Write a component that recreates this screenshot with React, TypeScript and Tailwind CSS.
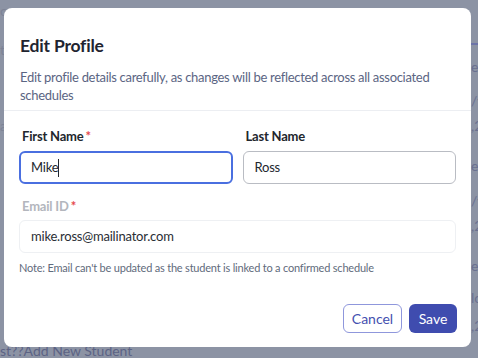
import React from 'react';

const font = { fontFamily: 'Lato, "Noto Sans", sans-serif' };

// rows of the student table that peeks out around the dialog
const backdropRows = [
    { h: 'h-[20px]', left: 'or', right: '' },
    { h: 'h-[20px]', left: '', right: '' },
    { h: 'h-[18px]', left: 't,2', right: '', bar: true },
    { h: 'h-[16px]', left: '', right: 'e' },
    { h: 'h-[16px]', left: '', right: '' },
    { h: 'h-[20px]', left: '', right: '/y' },
    { h: 'h-[30px]', left: 'a', right: ',2' },
    { h: 'h-[15px]', left: '', right: '' },
    { h: 'h-[20px]', left: '', right: 'e' },
    { h: 'h-[15px]', left: '', right: '' },
    { h: 'h-[20px]', left: '', right: '/y' },
    { h: 'h-[30px]', left: '', right: ',2' },
    { h: 'h-[15px]', left: '', right: '' },
    { h: 'h-[20px]', left: '', right: 'e' },
    { h: 'h-[12px]', left: '', right: '' },
    { h: 'h-[20px]', left: '', right: 'lo' },
    { h: 'h-[36px]', left: '', right: ',2' },
    { h: 'h-[15px]', left: 'st??Add New Student', right: '' },
];

function Field({ label, required, muted, children }: { label: string; required?: boolean; muted?: boolean; children: React.ReactNode }) {
    return (
        <div className="flex flex-col">
            <label className={`pl-[3px] text-[13px] leading-5 font-bold tracking-[-0.2px] ${muted ? 'text-[#b3b6bd]' : 'text-[#22262d]'}`}>
                {label}
                {required && <span className="text-[#e5484d] ml-[2px]">*</span>}
            </label>
            {children}
        </div>
    );
}

export default function App() {
    return (
        <div className="relative w-[478px] h-[358px] overflow-hidden bg-[#8c93a4]" style={font}>

            {/* Page behind the overlay */}
            <div className="flex flex-col text-[14px] text-[#6a7090]">
                {backdropRows.map((r, i) => (
                    <div key={i} className={`${r.h} flex justify-between items-center whitespace-nowrap`}>
                        <span className={i === 17 ? 'text-[#5c6384]' : 'text-[#7d8396]'}>{r.left}</span>
                        <div className="relative w-[7px] h-full flex items-center overflow-hidden">
                            {r.bar && <div className="absolute top-[3px] left-0 right-0 h-[2px] bg-[#6d74a8]"></div>}
                            <span>{r.right}</span>
                        </div>
                    </div>
                ))}
            </div>

            {/* Modal */}
            <div className="absolute left-[4px] top-[8px] w-[467px] h-[339px] bg-white rounded-[8px] flex flex-col">
                <div className="px-4 pt-6 pb-[6px] border-b border-[#eceef2]">
                    <h2 className="text-[17.5px] leading-7 font-bold tracking-[-0.2px] text-[#1f2430]">Edit Profile</h2>
                    <p className="mt-2 text-[13px] leading-[18px] tracking-[-0.3px] text-[#5b6583]">
                        Edit profile details carefully, as changes will be reflected across all associated schedules
                    </p>
                </div>

                <div className="px-[15px] pt-[15px] flex flex-col">
                    <div className="grid grid-cols-2 gap-[10px]">
                        <Field label="First Name" required>
                            <div className="mt-[5px] h-[33px] rounded-[6px] border-2 border-[#4a6fe0] px-[10px] flex items-center text-[13px] tracking-[-0.2px] text-[#23272e]">
                                Mike<span className="w-px h-[18px] bg-[#23272e]"></span>
                            </div>
                        </Field>
                        <Field label="Last Name">
                            <div className="mt-[5px] h-[33px] rounded-[6px] border border-[#b9bcc3] px-[11px] flex items-center text-[13px] tracking-[-0.2px] text-[#23272e]">
                                Ross
                            </div>
                        </Field>
                    </div>

                    <div className="mt-3">
                        <Field label="Email ID" required muted>
                            <div className="mt-1 h-[33px] rounded-[6px] border border-[#eef0f3] px-[11px] flex items-center text-[13px] tracking-[-0.2px] text-[#2a2e35]">
                                mike.ross@mailinator.com
                            </div>
                        </Field>
                    </div>

                    <p className="mt-[7px] text-[11px] leading-4 tracking-[-0.2px] text-[#5f6b7c]">
                        Note: Email can't be updated as the student is linked to a confirmed schedule
                    </p>
                </div>

                <div className="mt-auto px-[14px] pb-[14px] flex justify-end gap-[7px]">
                    <button className="h-[29px] w-[59px] rounded-[6px] border border-[#8f97dc] text-[14px] text-[#4450b0] bg-white">Cancel</button>
                    <button className="h-[29px] w-[48px] rounded-[6px] bg-[#3f4caf] text-[14px] text-white">Save</button>
                </div>
            </div>
        </div>
    );
}
